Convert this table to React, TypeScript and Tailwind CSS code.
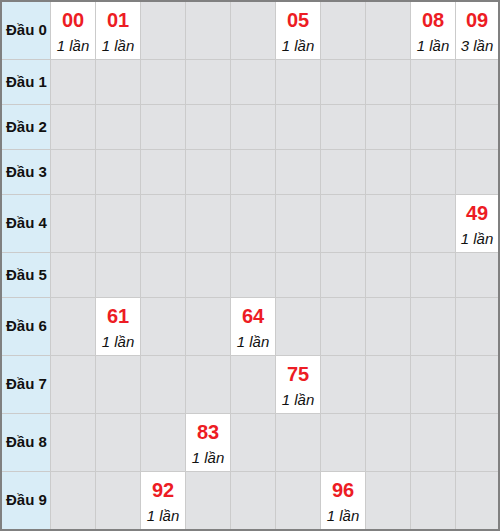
import React from "react";

const counts: Record<string, number> = {
  "00": 1,
  "01": 1,
  "05": 1,
  "08": 1,
  "09": 3,
  "49": 1,
  "61": 1,
  "64": 1,
  "75": 1,
  "83": 1,
  "92": 1,
  "96": 1,
};

const heads = [0, 1, 2, 3, 4, 5, 6, 7, 8, 9];

export default function App() {
  return (
    <div className="h-[531px] w-[500px] border-2 border-[#808080] bg-[#cbcbcb] font-['Liberation_Sans',Arial,sans-serif]">
      <div className="grid grid-cols-[48px_repeat(9,44px)_1fr] gap-px">
        {heads.map((h) => {
          const rowHasData = heads.some((t) => counts[`${h}${t}`]);
          return (
            <React.Fragment key={h}>
              <div
                className={`flex items-center bg-[#d9edf7] pl-1 text-[15px] font-bold text-[#111] ${rowHasData ? "h-[57px]" : "h-[44px]"}`}
              >
                Đầu {h}
              </div>
              {heads.map((t) => {
                const key = `${h}${t}`;
                const count = counts[key];
                if (!count) {
                  return <div key={key} className="bg-[#e1e2e4]"></div>;
                }
                return (
                  <div
                    key={key}
                    className="flex flex-col items-center justify-center bg-white pt-[2px]"
                  >
                    <div className="text-[20px] leading-[26px] font-bold text-[#ed1c24]">
                      {key}
                    </div>
                    <div className="mt-[2px] text-[15px] leading-[22px] text-[#111] italic">
                      {count} lần
                    </div>
                  </div>
                );
              })}
            </React.Fragment>
          );
        })}
      </div>
    </div>
  );
}
